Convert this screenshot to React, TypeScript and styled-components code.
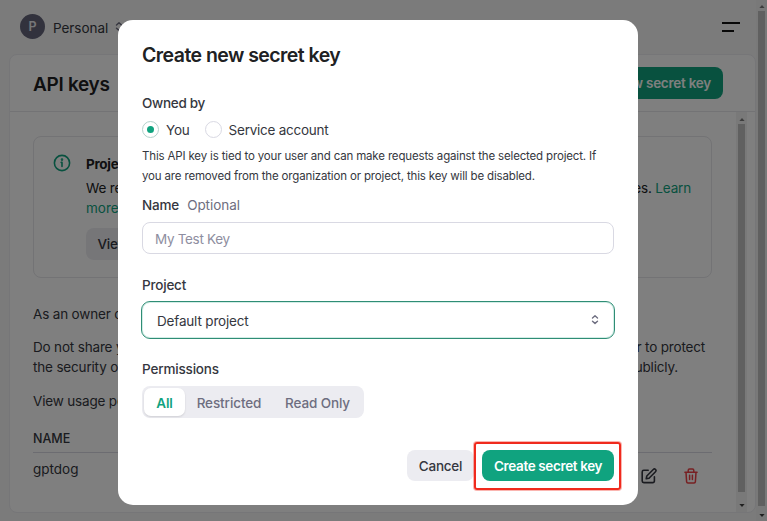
import React from 'react';
import styled, { createGlobalStyle } from 'styled-components';

const Global = createGlobalStyle`
  *{box-sizing:border-box}
  html,body{margin:0;width:767px;height:521px;overflow:hidden}
  body{background:#f6f6f6;font-family:Inter,"Liberation Sans",sans-serif;font-size:14px;line-height:20px;color:#353740}
  button,input{font:inherit;color:inherit}
  svg{display:block}
`;

const Txt = styled.span<{ $ls?: number; $size?: number; $w?: number; $c?: string }>`
  white-space: pre;
  letter-spacing: ${p => p.$ls ?? -0.17}px;
  font-size: ${p => p.$size ?? 13.5}px;
  font-weight: ${p => p.$w ?? 400};
  color: ${p => p.$c ?? 'inherit'};
`;

const Page = styled.div`
  display: flex;
  width: 767px;
  height: 521px;
`;
const Main = styled.div`
  flex: 1;
  display: flex;
  flex-direction: column;
  padding-left: 9px;
  min-width: 0;
`;
const TopBar = styled.header`
  display: flex;
  align-items: center;
  height: 54px;
  padding: 0 16px 0 11px;
`;
const Avatar = styled.div`
  width: 25px;
  height: 25px;
  border-radius: 50%;
  background: #64647a;
  color: #ececf1;
  display: flex;
  align-items: center;
  justify-content: center;
  margin: -1px 8px 0 0;
`;
const Menu = styled.div`
  margin-left: auto;
  display: grid;
  gap: 6px;
`;
const MenuLine = styled.span<{ $w: number }>`
  height: 2px;
  width: ${p => p.$w}px;
  background: #111;
`;
const OrgName = styled.div`
  margin-right: 7px;
  padding-top: 2px;
`;
const Card = styled.section`
  height: 459px;
  background: #fff;
  border: 1px solid #ececf1;
  border-radius: 8px;
`;
const CardHeader = styled.div`
  display: flex;
  align-items: center;
  justify-content: space-between;
  height: 57px;
  padding: 0 32px 0 23px;
  border-bottom: 1px solid #e6e6ea;
`;
const CardTitle = styled.div`
  padding-top: 4px;
`;
const PrimaryButton = styled.button<{ $h: number }>`
  display: flex;
  align-items: center;
  justify-content: center;
  height: ${p => p.$h}px;
  padding: 0 12px;
  border: 0;
  border-radius: 8px;
  background: #10a37f;
  color: #fff;
`;
const Scroller = styled.div`
  display: flex;
  height: 400px;
  padding-right: 8px;
`;
const Content = styled.div`
  flex: 1;
  padding: 24px 24px 0 23px;
`;
const Info = styled.div`
  height: 142px;
  border: 1px solid #e6e6ea;
  border-radius: 8px;
  padding: 17px 20px 17px 19px;
  display: flex;
  gap: 15px;
`;
const InfoBody = styled.div`
  flex: 1;
  display: flex;
  flex-direction: column;
  color: #202123;
`;
const InfoHead = styled.div`
  height: 25px;
`;
const Line = styled.div<{ $gap?: number; $end?: number }>`
  display: flex;
  justify-content: space-between;
  height: 20px;
  margin-top: ${p => p.$gap ?? 0}px;
  padding-right: ${p => p.$end ?? 0}px;
`;
const GreyButton = styled.button<{ $w: number; $h: number; $top?: number }>`
  display: flex;
  align-items: center;
  justify-content: center;
  flex: none;
  width: ${p => p.$w}px;
  height: ${p => p.$h}px;
  margin-top: ${p => p.$top ?? 0}px;
  padding: 0;
  border: 0;
  border-radius: 8px;
  background: #ececf1;
  color: #353740;
`;
const TableHead = styled.div`
  height: 26px;
  margin-top: 16px;
  padding-top: 1px;
  border-bottom: 1px solid #d9d9e3;
`;
const TableRow = styled.div`
  display: flex;
  justify-content: space-between;
  padding: 6px 14px 0 0;
`;
const Actions = styled.div`
  display: flex;
  gap: 27px;
  padding-top: 9px;
`;
const Bar = styled.div<{ $w: number }>`
  width: ${p => p.$w}px;
  height: 100%;
  background: #f2f2f2;
  display: flex;
  flex-direction: column;
  align-items: center;
`;
const Arrow = styled.svg`
  width: 6px;
  height: 3px;
  flex: none;
`;
const Thumb = styled.div<{ $top: number; $h: number }>`
  width: 7px;
  height: ${p => p.$h}px;
  margin: ${p => p.$top}px 0 auto;
  background: #c1c1c1;
`;
const Spacer = styled.div<{ $h: number }>`
  flex: none;
  height: ${p => p.$h}px;
`;

const Overlay = styled.div`
  position: fixed;
  inset: 0;
  background: rgba(0, 0, 0, 0.5);
  padding: 20px 0 0 118px;
`;
const Dialog = styled.div`
  width: 520px;
  height: 485px;
  border-radius: 15px;
  background: #fff;
  padding: 23px 24px 0;
  display: flex;
  flex-direction: column;
  & > * {
    flex-shrink: 0;
  }
`;
const Title = styled.h2`
  margin: 0 0 26px;
  height: 24px;
  line-height: 24px;
  font-weight: 600;
`;
const Label = styled.div`
  height: 20px;
  display: flex;
  gap: 8px;
`;
const Radios = styled.div`
  display: flex;
  align-items: center;
  height: 20px;
  margin: 7px 0 6px;
`;
const Radio = styled.span<{ $on?: boolean }>`
  width: 17px;
  height: 17px;
  margin: -1px 7px 0 0;
  border: 1px solid ${p => (p.$on ? '#b4d2cc' : '#d9d9e3')};
  border-radius: 50%;
  display: grid;
  place-items: center;
  &::after {
    content: '';
    width: 7px;
    height: 7px;
    border-radius: 50%;
    background: ${p => (p.$on ? '#10a37f' : 'transparent')};
  }
`;
const RadioText = styled.span`
  margin-right: 15px;
`;
const Hint = styled.div`
  display: flex;
  flex-direction: column;
  height: 40px;
  margin-bottom: 9px;
`;
const Field = styled.div`
  height: 32px;
  margin: 7px 0 21px;
  border: 1px solid #d9d9e3;
  border-radius: 8px;
  padding: 6px 12px;
  color: #8e8ea0;
`;
const Select = styled.div`
  height: 38px;
  margin: 6px -1px 20px;
  border: 1px solid #2f8d75;
  box-shadow: inset 0 0 0 1px #d2ede6;
  border-radius: 9px;
  padding: 0 15px;
  display: flex;
  align-items: center;
  justify-content: space-between;
`;
const SelectValue = styled.div`
  padding-top: 2px;
`;
const Segments = styled.div`
  display: flex;
  width: 222px;
  height: 32px;
  margin-top: 7px;
  padding: 2px;
  border-radius: 8px;
  background: #ececf1;
  color: #6e6e80;
`;
const Segment = styled.div<{ $w: number; $on?: boolean }>`
  width: ${p => p.$w}px;
  padding-top: 2px;
  display: flex;
  align-items: center;
  justify-content: center;
  border-radius: 7px;
  background: ${p => (p.$on ? '#fff' : 'transparent')};
  color: ${p => (p.$on ? '#10a37f' : 'inherit')};
  box-shadow: ${p => (p.$on ? '0 1px 2px rgba(0,0,0,.12)' : 'none')};
`;
const Footer = styled.div`
  display: flex;
  justify-content: flex-end;
  margin: 24px -7px 0 0;
`;
const Highlight = styled.div`
  width: 147px;
  height: 48px;
  border: 2px solid #f02a1d;
  box-shadow: 0 0 0 1px rgba(240, 42, 29, 0.35);
  border-radius: 3px;
  padding: 6px 5px 0 6px;
  display: grid;
  align-content: start;
`;

const Chevrons = ({ c }: { c: string }) => (
  <svg width="8" height="12" viewBox="0 0 8 12" fill="none" stroke={c} strokeWidth="1.4" strokeLinecap="round" strokeLinejoin="round">
    <path d="M1.5 4 4 1.8 6.5 4M1.5 7.2 4 9.4 6.5 7.2" />
  </svg>
);
const InfoIcon = () => (
  <svg width="18" height="18" viewBox="0 0 18 18" fill="none" stroke="#10a37f" strokeWidth="1.6" strokeLinecap="round">
    <circle cx="9" cy="9" r="7.6" />
    <path d="M9 8.4V12.4M8.2 8.4H9" />
    <circle cx="9" cy="5.6" r=".5" fill="#10a37f" />
  </svg>
);
const EditIcon = () => (
  <svg width="16" height="16" viewBox="0 0 16 16" fill="none" stroke="#353740" strokeWidth="1.6" strokeLinecap="round" strokeLinejoin="round">
    <path d="M7.2 2.3H2.8A1.6 1.6 0 0 0 1.2 3.9V13A1.6 1.6 0 0 0 2.8 14.6H11.8A1.6 1.6 0 0 0 13.4 13V8.8" />
    <path d="M12.3 1.5a1.5 1.5 0 0 1 2.2 2.2L8 10.2l-2.8.6.6-2.8z" />
  </svg>
);
const TrashIcon = () => (
  <svg width="14" height="16" viewBox="0 0 14 16" fill="none" stroke="#ef4146" strokeWidth="1.5" strokeLinecap="round" strokeLinejoin="round">
    <path d="M.9 4.2H13.1M4.2 4V2.4A1.3 1.3 0 0 1 5.5 1.1H8.5A1.3 1.3 0 0 1 9.8 2.4V4M2 4.4 2.6 13.6A1.4 1.4 0 0 0 4 14.9H10A1.4 1.4 0 0 0 11.4 13.6L12 4.4M5.6 7.2V11.4M8.4 7.2V11.4" />
  </svg>
);
const Scrollbar = ({ w, up, top, h, bottom }: { w: number; up: number; top: number; h: number; bottom: number }) => (
  <Bar $w={w}>
    <Spacer $h={up} />
    <Arrow viewBox="0 0 7 4"><path d="M3.5 0 7 4H0z" fill="#7b7b7b" /></Arrow>
    <Thumb $top={top} $h={h} />
    <Arrow viewBox="0 0 7 4"><path d="M0 0H7L3.5 4z" fill="#404040" /></Arrow>
    <Spacer $h={bottom} />
  </Bar>
);

export default function App() {
  return (
    <>
      <Global />
      <Page>
        <Main>
          <TopBar>
            <Avatar><Txt $size={12.5} $w={600}>P</Txt></Avatar>
            <OrgName><Txt $ls={-0.05}>Personal</Txt></OrgName>
            <Chevrons c="#6e6e80" />
            <Menu><MenuLine $w={18} /><MenuLine $w={12} /></Menu>
          </TopBar>
          <Card>
            <CardHeader>
              <CardTitle><Txt $size={19} $w={600} $c="#202123" $ls={-0.3}>API keys</Txt></CardTitle>
              <PrimaryButton $h={32}><Txt $w={600} $ls={-0.25}>+ Create new secret key</Txt></PrimaryButton>
            </CardHeader>
            <Scroller>
              <Content>
                <Info>
                  <InfoIcon />
                  <InfoBody>
                    <InfoHead><Txt $w={700} $ls={-0.3}>Project API keys</Txt></InfoHead>
                    <Line><Txt>We recommend</Txt><Txt>resources. <Txt $c="#10a37f">Learn</Txt></Txt></Line>
                    <Line><Txt $c="#10a37f" $ls={0}>more</Txt></Line>
                    <GreyButton $w={118} $h={32} $top={10}><Txt $w={500}>View user keys</Txt></GreyButton>
                  </InfoBody>
                </Info>
                <Line $gap={26}><Txt>As an owner of this project</Txt></Line>
                <Line $gap={13} $end={7}><Txt>Do not share your API key</Txt><Txt>in order to protect</Txt></Line>
                <Line $end={34}><Txt>the security of your account</Txt><Txt>publicly.</Txt></Line>
                <Line $gap={14}><Txt>View usage per API key</Txt></Line>
                <TableHead><Txt $size={12.5} $w={500} $ls={0}>NAME</Txt></TableHead>
                <TableRow>
                  <Txt $ls={0}>gptdog</Txt>
                  <Actions><EditIcon /><TrashIcon /></Actions>
                </TableRow>
              </Content>
              <Scrollbar w={11} up={6} top={3} h={368} bottom={5} />
            </Scroller>
          </Card>
        </Main>
        <Scrollbar w={11} up={5} top={3} h={495} bottom={4} />
      </Page>
      <Overlay>
        <Dialog role="dialog">
          <Title><Txt $size={19.5} $w={600} $ls={-0.55} $c="#202123">Create new secret key</Txt></Title>
          <Label><Txt $w={500} $ls={-0.3}>Owned by</Txt></Label>
          <Radios>
            <Radio $on /><RadioText><Txt $ls={-0.2}>You</Txt></RadioText>
            <Radio /><RadioText><Txt $ls={-0.25}>Service account</Txt></RadioText>
          </Radios>
          <Hint>
            <Txt $size={11.5} $ls={-0.16}>This API key is tied to your user and can make requests against the selected project. If</Txt>
            <Txt $size={11.5} $ls={-0.16}>you are removed from the organization or project, this key will be disabled.</Txt>
          </Hint>
          <Label><Txt $w={500}>Name</Txt><Txt $c="#6e6e80" $ls={-0.05}>Optional</Txt></Label>
          <Field><Txt $ls={-0.32}>My Test Key</Txt></Field>
          <Label><Txt $w={500} $ls={-0.2}>Project</Txt></Label>
          <Select><SelectValue><Txt>Default project</Txt></SelectValue><Chevrons c="#6e6e80" /></Select>
          <Label><Txt $w={500}>Permissions</Txt></Label>
          <Segments>
            <Segment $w={41} $on><Txt $w={600}>All</Txt></Segment>
            <Segment $w={88}><Txt $w={500} $ls={-0.1}>Restricted</Txt></Segment>
            <Segment $w={89}><Txt $w={500} $ls={-0.1}>Read Only</Txt></Segment>
          </Segments>
          <Footer>
            <GreyButton $w={67} $h={31} $top={8}><Txt $w={500} $ls={-0.25}>Cancel</Txt></GreyButton>
            <Highlight><PrimaryButton $h={31}><Txt $w={600} $ls={-0.37}>Create secret key</Txt></PrimaryButton></Highlight>
          </Footer>
        </Dialog>
      </Overlay>
    </>
  );
}
